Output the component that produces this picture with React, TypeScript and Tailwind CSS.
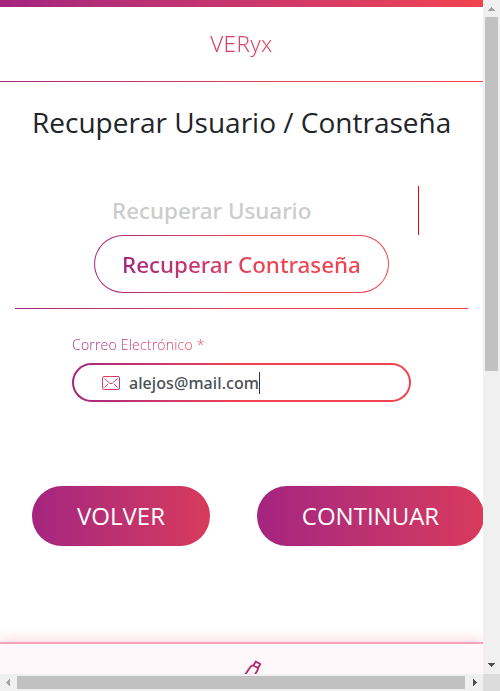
import React from "react";

function Header() {
  return (
    <header className="h-[82px] shrink-0">
      <div className="h-[7px] bg-linear-to-r from-[#a4247f] to-[#f14350]" />
      <div className="flex h-[74px] items-center justify-center">
        <span className="bg-linear-to-r from-[#d63a62] to-[#e04a68] bg-clip-text font-['Noto_Sans',sans-serif] text-[22.4px] leading-8 font-light tracking-[0.4px] text-transparent">
          VERyx
        </span>
      </div>
      <div className="h-px bg-linear-to-r from-[#a4247f] via-[#e04055] to-[#f14350]" />
    </header>
  );
}

function Tabs() {
  return (
    <section className="mx-[15px] flex h-[123px] flex-col border-b border-transparent bg-linear-to-r from-[#a4247f] via-[#e8404f] to-[#f14350] bg-[length:100%_1px] bg-bottom bg-no-repeat [background-origin:border-box]">
      <div className="mr-[49px] flex h-[49px] items-center justify-start border-r border-[#f00] pl-[97px] font-['Noto_Sans',sans-serif] text-[22.4px] leading-8 font-medium text-[#cccccc]">
        <span>Recuperar Usuario</span>
      </div>
      <div className="ml-[79px] h-[58px] w-[295px] rounded-full bg-linear-to-r from-[#a4247f] via-[#ef4350] to-[#f14350] p-px">
        <div className="flex h-full items-center justify-center rounded-full bg-white">
          <span className="mt-px bg-linear-to-r from-[#a4247f] to-[#ef4350] to-60% bg-clip-text font-['Noto_Sans',sans-serif] text-[22.4px] leading-8 font-medium whitespace-nowrap text-transparent">
            Recuperar Contraseña
          </span>
        </div>
      </div>
    </section>
  );
}

function EmailField() {
  return (
    <div className="mt-[26px] ml-[72px] w-[339px]">
      <label className="block w-fit bg-linear-to-r from-[#a4247f] to-[#f14350] bg-clip-text text-[14px] leading-5 font-light tracking-[0.2px] text-transparent">
        Correo Electrónico *
      </label>
      <div className="mt-[8px] h-[39px] rounded-full bg-linear-to-r from-[#a4247f] to-[#f14350] to-50% p-[2px]">
        <div className="flex h-full items-center rounded-full bg-white pl-[28px]">
          <svg width="18" height="14" viewBox="0 0 18 14" fill="none" strokeWidth="1">
            <defs>
              <linearGradient id="mail" x1="0" x2="18" y1="0" y2="0" gradientUnits="userSpaceOnUse">
                <stop stopColor="#e8405a" />
                <stop offset="1" stopColor="#c83468" />
              </linearGradient>
            </defs>
            <g stroke="url(#mail)">
              <rect x=".5" y=".5" width="17" height="13" rx="1.5" />
              <path d="M2.5 2.5 7.6 7.2Q9 8.3 10.4 7.2L15.5 2.5M2.5 11.5 6 8M15.5 11.5 12 8" />
            </g>
          </svg>
          <span className="ml-[9px] w-[130px] font-['Noto_Sans',sans-serif] text-[16px] leading-6 font-medium tracking-[0.07px] text-[#495057]">alejos@mail.com</span>
          <span className="h-[22px] w-px bg-[#333]" />
        </div>
      </div>
    </div>
  );
}

function Footer() {
  return (
    <footer className="mt-auto flex h-[32px] shrink-0 justify-center overflow-visible border-t-2 border-[#f9a3b8] bg-[#fff8fa] shadow-[0_0_16px_0_#f9c6d2]">
      <svg className="mt-[16px] ml-[22px] h-[14px] w-[18px]" viewBox="0 0 18 14" fill="none" stroke="#b92c70" strokeWidth="1.9" strokeLinejoin="round">
        <path d="M1.2 14.5 6 7.5Q7 5.2 9.5 5.5L11.8 1.6 16.3 4 14 8Q14 10 12.8 11.5L11 14.5M9.5 5.5 14 8" />
      </svg>
    </footer>
  );
}

export default function App() {
  return (
    <div className="grid h-[691px] w-[500px] grid-cols-[483px_17px] grid-rows-[674px_17px] overflow-hidden bg-white font-['Open_Sans',sans-serif]">
      <main className="flex flex-col overflow-hidden">
        <Header />
        <h1 className="mt-[20px] mb-px ml-[32px] h-[83px] text-[28px] leading-[40px] font-normal whitespace-nowrap text-[#212529]">
          Recuperar Usuario / Contraseña
        </h1>
        <Tabs />
        <EmailField />
        <div className="mt-[84px] ml-[32px] flex gap-[47px] text-[24px] text-white">
          <button className="h-[60px] w-[178px] shrink-0 rounded-full bg-linear-to-r from-[#a4247f] to-[#d83a5c]">VOLVER</button>
          <button className="h-[60px] w-[227px] shrink-0 rounded-full bg-linear-to-r from-[#a4247f] to-[#d83a5c]">CONTINUAR</button>
        </div>
        <Footer />
      </main>
      <div className="flex flex-col items-center bg-[#f0f0f0]">
        <svg width="17" height="17" shapeRendering="crispEdges"><path d="M5 11h7L8.5 7Z" fill="#a3a3a3" /></svg>
        <div className="mr-px h-[354px] w-[13px] bg-[#c1c1c1]" />
        <svg className="mt-auto" width="17" height="17" shapeRendering="crispEdges"><path d="M5 6h7L8.5 10Z" fill="#505050" /></svg>
      </div>
      <div className="flex items-center bg-[#f0f0f0]">
        <svg width="17" height="17" shapeRendering="crispEdges"><path d="M10 5v7L6 8.5Z" fill="#a3a3a3" /></svg>
        <div className="mb-px h-[13px] w-[448px] bg-[#c1c1c1]" />
        <svg className="ml-auto" width="17" height="17" shapeRendering="crispEdges"><path d="M7 5v7L11 8.5Z" fill="#505050" /></svg>
      </div>
      <div className="bg-[#dcdcdc]" />
    </div>
  );
}
